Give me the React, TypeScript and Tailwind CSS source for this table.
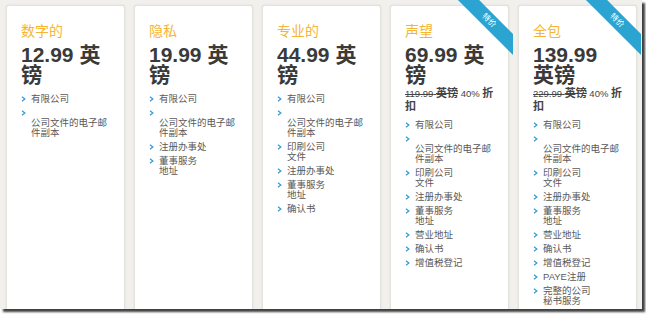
import React from 'react';

type Plan = {
  name: string;
  price: string[];
  was?: string;
  features: string[][];
};

const EMAIL = ['', '公司文件的电子邮', '件副本'];
const PRINT = ['印刷公司', '文件'];
const DIRECTOR = ['董事服务', '地址'];

const PLANS: Plan[] = [
  { name: '数字的', price: ['12.99 英', '镑'], features: [['有限公司'], EMAIL] },
  { name: '隐私', price: ['19.99 英', '镑'], features: [['有限公司'], EMAIL, ['注册办事处'], DIRECTOR] },
  {
    name: '专业的',
    price: ['44.99 英', '镑'],
    features: [['有限公司'], EMAIL, PRINT, ['注册办事处'], DIRECTOR, ['确认书']],
  },
  {
    name: '声望',
    price: ['69.99 英', '镑'],
    was: '119.99',
    features: [['有限公司'], EMAIL, PRINT, ['注册办事处'], DIRECTOR, ['营业地址'], ['确认书'], ['增值税登记']],
  },
  {
    name: '全包',
    price: ['139.99', '英镑'],
    was: '229.99',
    features: [
      ['有限公司'],
      EMAIL,
      PRINT,
      ['注册办事处'],
      DIRECTOR,
      ['营业地址'],
      ['确认书'],
      ['增值税登记'],
      ['PAYE注册'],
      ['完整的公司', '秘书服务'],
    ],
  },
];

const Chevron = () => (
  <svg width="5" height="6" viewBox="0 0 5 6" className="mt-[2px]">
    <polyline points="1,0.8 3.8,3 1,5.2" fill="none" stroke="#3a9bd4" strokeWidth="1.3" />
  </svg>
);

const Ribbon = () => (
  <div className="absolute -top-[6px] -right-[5px] w-[60px] h-[60px] overflow-hidden pointer-events-none">
    <div className="absolute left-[-14px] top-[12.5px] w-[100px] h-[15px] rotate-45 bg-[#2ba4d2] text-white text-[8px] leading-[15px] text-center">
      特价
    </div>
  </div>
);

const Card = ({ plan }: { plan: Plan }) => (
  <div className="relative w-[119px] h-[330px] shrink-0 bg-white border border-[#e4e2dd] rounded-t-[3px] shadow-[0_0_2px_rgba(0,0,0,0.1)] px-[14px] pt-[16px]">
    {plan.was && <Ribbon />}
    <div className="text-[14px] leading-[18px] text-[#f6b535]">{plan.name}</div>
    <div className="mt-[5px] text-[21px] leading-[20px] font-bold text-[#3a3a3a]">
      {plan.price.map(l => (
        <div key={l} className="h-[20px] whitespace-nowrap">{l}</div>
      ))}
    </div>
    {plan.was && (
      <div className="mt-[2px] text-[#444] text-[11px] leading-[13px]">
        <div className="h-[13px] whitespace-nowrap">
          <span className="text-[9.5px] line-through">{plan.was} </span>
          <b className="line-through">英镑</b>
          <span className="text-[9.5px]"> 40% </span>
          <b>折</b>
        </div>
        <div className="h-[13px]">
          <b>扣</b>
        </div>
      </div>
    )}
    <ul className={plan.was ? 'mt-[7px]' : 'mt-[9px]'}>
      {plan.features.map((f, i) => (
        <li key={i} className="flex mb-[4px]">
          <div className="w-[10px] shrink-0">
            <Chevron />
          </div>
          <div className="text-[9.5px] text-[#5a5a5a]">
            {f.map((l, j) => (
              <div key={j} className="h-[10px] leading-[10px] whitespace-nowrap">{l}</div>
            ))}
          </div>
        </li>
      ))}
    </ul>
  </div>
);

export default function App() {
  return (
    <div className="w-[646px] h-[314px] bg-white" style={{ fontFamily: '"Liberation Sans", "Noto Sans CJK SC", sans-serif' }}>
      <div className="w-[642px] h-[309px] bg-[#f1f0ec] overflow-hidden shadow-[3px_3px_2px_rgba(0,0,0,0.75)] flex gap-[9px] pl-[6px] pt-[5px]">
        {PLANS.map(p => (
          <Card key={p.name} plan={p} />
        ))}
      </div>
    </div>
  );
}
